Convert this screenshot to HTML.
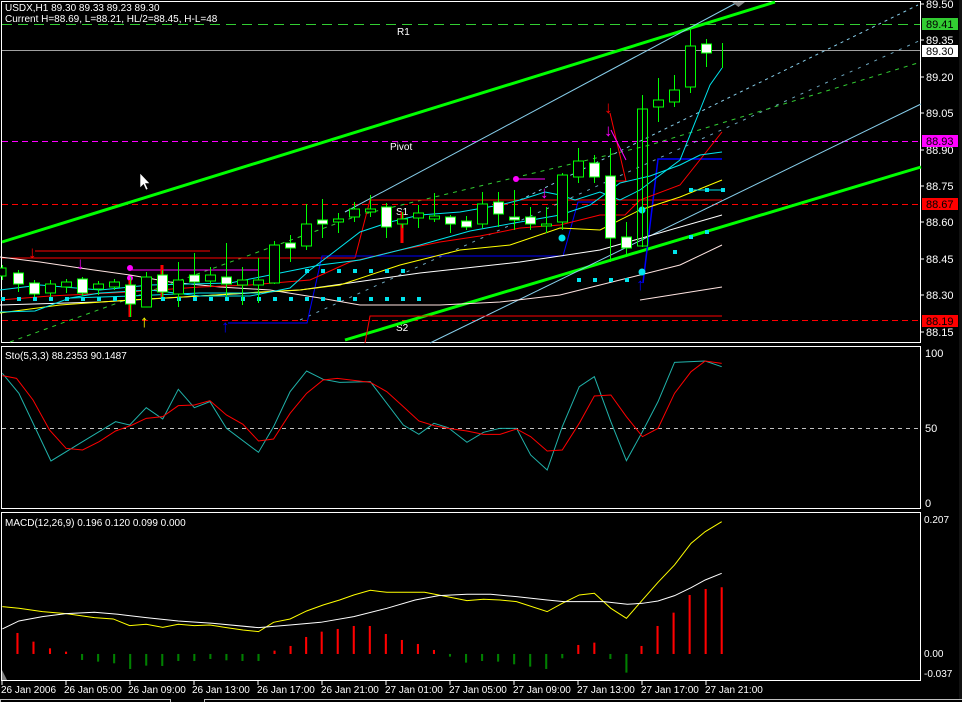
<!DOCTYPE html>
<html><head><meta charset="utf-8"><style>
html,body{margin:0;padding:0;background:#000;}
svg{display:block;font-family:"Liberation Sans",sans-serif;}
</style></head><body>
<svg width="962" height="702" viewBox="0 0 962 702" xmlns="http://www.w3.org/2000/svg">
<rect width="962" height="702" fill="#000"/>
<rect x="959" y="0" width="3" height="702" fill="#111"/>
<rect x="1.5" y="1.5" width="919" height="341" fill="none" stroke="#fff"/>
<rect x="1.5" y="346.5" width="919" height="162" fill="none" stroke="#fff"/>
<rect x="1.5" y="512.5" width="919" height="168" fill="none" stroke="#fff"/>

<line x1="2" y1="24.5" x2="920" y2="24.5" stroke="#32cd32" stroke-dasharray="10,6"/>
<line x1="2" y1="50.5" x2="920" y2="50.5" stroke="#a0a0a0"/>
<line x1="2" y1="141.5" x2="920" y2="141.5" stroke="#f0f" stroke-dasharray="6,4"/>
<line x1="2" y1="204.5" x2="920" y2="204.5" stroke="#f00" stroke-dasharray="6,4"/>
<line x1="2" y1="320.5" x2="920" y2="320.5" stroke="#f00" stroke-dasharray="6,4"/>
<g fill="#fff" font-size="10">
<text x="397" y="35">R1</text>
<text x="390" y="150">Pivot</text>
<text x="396" y="215">S1</text>
<text x="396" y="331">S2</text>
</g>
<line x1="2" y1="242" x2="775" y2="2" stroke="#00ff00" stroke-width="3"/>
<line x1="345" y1="340" x2="921" y2="167" stroke="#00ff00" stroke-width="3"/>
<line x1="345" y1="212" x2="738" y2="2" stroke="#87ceeb" stroke-width="1"/>
<line x1="430" y1="343" x2="921" y2="104" stroke="#87ceeb" stroke-width="1"/>
<line x1="520" y1="200" x2="918" y2="5" stroke="#87ceeb" stroke-dasharray="3,4"/>
<line x1="300" y1="320" x2="921" y2="40" stroke="#87ceeb" stroke-dasharray="3,6" opacity="0.8"/>
<polyline points="10,342 360,215 650,145 921,62" fill="none" stroke="#32cd32" stroke-dasharray="4,5"/>

<line x1="2" y1="258" x2="355" y2="258" stroke="#f00"/>
<polyline points="355,258 370,200 722,200" fill="none" stroke="#f00"/>
<polyline points="365,343 370,316 722,316" fill="none" stroke="#f00"/>
<line x1="35" y1="251" x2="210" y2="251" stroke="#f00"/>
<line x1="130" y1="270" x2="258" y2="270" stroke="#f0f"/>
<circle cx="130" cy="268" r="3" fill="#f0f"/>
<circle cx="130" cy="278" r="3" fill="#f0f"/>
<polyline points="228,323 307,323 322,256 563,256 578,202 595,202" fill="none" stroke="#0000ff"/>
<polyline points="643,283 658,159 722,159" fill="none" stroke="#0000ff" stroke-width="1.5"/>
<line x1="516" y1="179" x2="545" y2="179" stroke="#f0f"/>
<circle cx="516" cy="179" r="3" fill="#f0f"/>
<polyline points="610,113 626,181 611,181" fill="none" stroke="#f00"/>
<line x1="611" y1="130" x2="626" y2="160" stroke="#f0f"/>
<circle cx="611" cy="181" r="3.5" fill="#f0f"/>

<polyline points="0,257 40,262 80,268 130,275 170,282 220,287 270,290 320,298 360,305 400,305 440,305 500,302 560,295 620,280 680,265 722,245" fill="none" stroke="#ffe4e1"/>
<polyline points="0,305 100,302 200,296 300,290 420,273 520,262 600,250 722,215" fill="none" stroke="#fff"/>
<polyline points="640,300 722,287" fill="none" stroke="#ffe4e1"/>
<polyline points="0,313 60,305 130,300 200,296 260,292 300,290 340,285 400,265 460,250 510,245 560,228 600,230 640,210 680,197 722,180" fill="none" stroke="#ff0"/>
<polyline points="0,300 50,296 130,292 200,287 250,285 310,280 350,262 400,250 440,242 480,236 520,228 560,225 600,215 625,215 640,200 680,185 722,132" fill="none" stroke="#f00"/>
<polyline points="0,290 40,285 100,290 150,285 230,283 280,273 320,265 360,260 420,245 470,231 520,222 560,215 590,205 620,183 650,176 680,165 700,155 722,152" fill="none" stroke="#00e5ee"/>
<polyline points="0,312 35,311 70,298 100,293 150,290 200,296 250,296 290,288 310,270 330,255 360,232 390,222 420,215 460,212 500,205 520,200 545,192 560,195 575,200 600,192 620,200 640,190 680,160 700,110 710,85 722,68" fill="none" stroke="#00e5ee"/>
<polyline points="70,298 130,296 200,293 260,293" fill="none" stroke="#00e5ee"/>
<g fill="#00e5ee">
<rect x="1" y="297" width="4" height="4"/><rect x="17" y="297" width="4" height="4"/><rect x="33" y="297" width="4" height="4"/><rect x="49" y="297" width="4" height="4"/><rect x="65" y="297" width="4" height="4"/><rect x="81" y="297" width="4" height="4"/><rect x="97" y="297" width="4" height="4"/><rect x="113" y="297" width="4" height="4"/><rect x="129" y="297" width="4" height="4"/><rect x="145" y="297" width="4" height="4"/><rect x="161" y="297" width="4" height="4"/><rect x="177" y="297" width="4" height="4"/><rect x="193" y="297" width="4" height="4"/><rect x="209" y="297" width="4" height="4"/><rect x="225" y="297" width="4" height="4"/><rect x="241" y="297" width="4" height="4"/><rect x="257" y="297" width="4" height="4"/><rect x="273" y="297" width="4" height="4"/><rect x="289" y="297" width="4" height="4"/><rect x="305" y="297" width="4" height="4"/><rect x="321" y="297" width="4" height="4"/><rect x="337" y="297" width="4" height="4"/><rect x="353" y="297" width="4" height="4"/><rect x="369" y="297" width="4" height="4"/><rect x="385" y="297" width="4" height="4"/><rect x="401" y="297" width="4" height="4"/><rect x="417" y="297" width="4" height="4"/>
<rect x="305" y="269" width="4" height="4"/><rect x="321" y="269" width="4" height="4"/><rect x="337" y="269" width="4" height="4"/><rect x="353" y="269" width="4" height="4"/><rect x="369" y="269" width="4" height="4"/><rect x="385" y="269" width="4" height="4"/><rect x="401" y="269" width="4" height="4"/>
<rect x="577" y="278" width="4" height="4"/><rect x="593" y="278" width="4" height="4"/><rect x="609" y="278" width="4" height="4"/><rect x="625" y="278" width="4" height="4"/>
<rect x="673" y="250" width="4" height="4"/><rect x="689" y="235" width="4" height="4"/><rect x="705" y="230" width="4" height="4"/>
<rect x="689" y="188" width="4" height="4"/><rect x="705" y="188" width="4" height="4"/><rect x="721" y="188" width="4" height="4"/>
<circle cx="146" cy="298" r="3.5"/><circle cx="562" cy="238" r="3.5"/><circle cx="642" cy="210" r="3.5"/><circle cx="642" cy="272" r="3.5"/>
</g>
<line x1="689" y1="190" x2="723" y2="190" stroke="#00e5ee"/>

<line x1="130" y1="280" x2="130" y2="317" stroke="#f00" stroke-width="3"/>
<line x1="162" y1="265" x2="162" y2="297" stroke="#f00" stroke-width="3"/>
<line x1="402" y1="212" x2="402" y2="243" stroke="#f00" stroke-width="3"/>

<g stroke="#00ff00" stroke-width="1">
<line x1="2.5" y1="265" x2="2.5" y2="280"/><rect x="-1" y="268" width="7" height="8" fill="#000"/>
<line x1="18.5" y1="270" x2="18.5" y2="292"/><rect x="13.5" y="273" width="10" height="11" fill="#fff"/>
<line x1="34.5" y1="280" x2="34.5" y2="297"/><rect x="29.5" y="283" width="10" height="11" fill="#fff"/>
<line x1="50.5" y1="280" x2="50.5" y2="297"/><rect x="45.5" y="284" width="10" height="9" fill="#000"/>
<line x1="66.5" y1="279" x2="66.5" y2="293"/><rect x="61.5" y="282" width="10" height="5" fill="#000"/>
<line x1="82.5" y1="277" x2="82.5" y2="296"/><rect x="77.5" y="279" width="10" height="14" fill="#fff"/>
<line x1="98.5" y1="281" x2="98.5" y2="295"/><rect x="93.5" y="284" width="10" height="5" fill="#000"/>
<line x1="114.5" y1="279" x2="114.5" y2="290"/><rect x="109.5" y="282" width="10" height="5" fill="#000"/>
<line x1="130.5" y1="277" x2="130.5" y2="317"/><rect x="125.5" y="285" width="10" height="19" fill="#fff"/>
<line x1="146.5" y1="272" x2="146.5" y2="307"/><rect x="141.5" y="277" width="10" height="30" fill="#000"/>
<line x1="162.5" y1="270" x2="162.5" y2="297"/><rect x="157.5" y="275" width="10" height="17" fill="#fff"/>
<line x1="178.5" y1="262" x2="178.5" y2="307"/><rect x="173.5" y="280" width="10" height="14" fill="#000"/>
<line x1="194.5" y1="253" x2="194.5" y2="295"/><rect x="189.5" y="275" width="10" height="7" fill="#fff"/>
<line x1="210.5" y1="267" x2="210.5" y2="287"/><rect x="205.5" y="275" width="10" height="6" fill="#000"/>
<line x1="226.5" y1="243" x2="226.5" y2="297"/><rect x="221.5" y="277" width="10" height="7" fill="#fff"/>
<line x1="242.5" y1="267" x2="242.5" y2="305"/><rect x="237.5" y="280" width="10" height="5" fill="#000"/>
<line x1="258.5" y1="258" x2="258.5" y2="303"/><rect x="253.5" y="280" width="10" height="5" fill="#000"/>
<line x1="274.5" y1="241" x2="274.5" y2="284"/><rect x="269.5" y="245" width="10" height="38" fill="#000"/>
<line x1="290.5" y1="235" x2="290.5" y2="262"/><rect x="285.5" y="243" width="10" height="5" fill="#fff"/>
<line x1="306.5" y1="204" x2="306.5" y2="250"/><rect x="301.5" y="224" width="10" height="22" fill="#000"/>
<line x1="322.5" y1="199" x2="322.5" y2="238"/><rect x="317.5" y="220" width="10" height="4" fill="#fff"/>
<line x1="338.5" y1="213" x2="338.5" y2="233"/><rect x="333.5" y="219" width="10" height="3" fill="#000"/>
<line x1="354.5" y1="202" x2="354.5" y2="222"/><rect x="349.5" y="209" width="10" height="8" fill="#000"/>
<line x1="370.5" y1="195" x2="370.5" y2="217"/><rect x="365.5" y="209" width="10" height="3" fill="#000"/>
<line x1="386.5" y1="203" x2="386.5" y2="238"/><rect x="381.5" y="207" width="10" height="20" fill="#fff"/>
<line x1="402.5" y1="212" x2="402.5" y2="228"/><rect x="397.5" y="219" width="10" height="5" fill="#000"/>
<line x1="418.5" y1="205" x2="418.5" y2="228"/><rect x="413.5" y="213" width="10" height="5" fill="#000"/>
<line x1="434.5" y1="193" x2="434.5" y2="222"/><rect x="429.5" y="216" width="10" height="3" fill="#000"/>
<line x1="450.5" y1="215" x2="450.5" y2="233"/><rect x="445.5" y="217" width="10" height="7" fill="#fff"/>
<line x1="466.5" y1="216" x2="466.5" y2="230"/><rect x="461.5" y="221" width="10" height="6" fill="#fff"/>
<line x1="482.5" y1="192" x2="482.5" y2="228"/><rect x="477.5" y="204" width="10" height="20" fill="#000"/>
<line x1="498.5" y1="192" x2="498.5" y2="227"/><rect x="493.5" y="202" width="10" height="12" fill="#fff"/>
<line x1="514.5" y1="190" x2="514.5" y2="230"/><rect x="509.5" y="217" width="10" height="3" fill="#fff"/>
<line x1="530.5" y1="207" x2="530.5" y2="230"/><rect x="525.5" y="217" width="10" height="7" fill="#fff"/>
<line x1="546.5" y1="207" x2="546.5" y2="233"/><rect x="541.5" y="224" width="10" height="2" fill="#000"/>
<line x1="562.5" y1="173" x2="562.5" y2="230"/><rect x="557.5" y="175" width="10" height="47" fill="#000"/>
<line x1="578.5" y1="148" x2="578.5" y2="183"/><rect x="573.5" y="161" width="10" height="16" fill="#000"/>
<line x1="594.5" y1="155" x2="594.5" y2="183"/><rect x="589.5" y="163" width="10" height="14" fill="#fff"/>
<line x1="610.5" y1="148" x2="610.5" y2="262"/><rect x="605.5" y="176" width="10" height="62" fill="#fff"/>
<line x1="626.5" y1="222" x2="626.5" y2="257"/><rect x="621.5" y="237" width="10" height="11" fill="#fff"/>
<line x1="642.5" y1="95" x2="642.5" y2="247"/><rect x="637.5" y="109" width="10" height="137" fill="none"/>
<line x1="658.5" y1="78" x2="658.5" y2="122"/><rect x="653.5" y="100" width="10" height="7" fill="#000"/>
<line x1="674.5" y1="75" x2="674.5" y2="107"/><rect x="669.5" y="90" width="10" height="12" fill="#000"/>
<line x1="690.5" y1="28" x2="690.5" y2="93"/><rect x="685.5" y="46" width="10" height="41" fill="#000"/>
<line x1="706.5" y1="39" x2="706.5" y2="67"/><rect x="701.5" y="44" width="10" height="9" fill="#fff"/>
<line x1="722.5" y1="43" x2="722.5" y2="68"/>
</g>
<g font-size="17" font-weight="bold">
<text x="28" y="258" fill="#f00">↓</text>
<text x="76" y="269" fill="#f0f">↓</text>
<text x="540" y="198" fill="#f0f">↓</text>
<text x="604" y="113" fill="#f00">↓</text>
<text x="604" y="136" fill="#f0f">↓</text>
<text x="140" y="327" fill="#ff0">↑</text>
<text x="221" y="332" fill="#00f">↑</text>
<text x="636" y="290" fill="#00f">↑</text>
</g>
<path d="M140,173 L140,188 L143.5,184.5 L146,190 L148,189 L145.5,183.5 L150,183.5 Z" fill="#fff" stroke="#000" stroke-width="0.6"/>
<path d="M732,2 L745,2 L738.5,7 Z" fill="#808080"/>

<g stroke="#fff"><line x1="921" y1="4" x2="924" y2="4"/><line x1="921" y1="40" x2="924" y2="40"/><line x1="921" y1="77" x2="924" y2="77"/><line x1="921" y1="113" x2="924" y2="113"/><line x1="921" y1="150" x2="924" y2="150"/><line x1="921" y1="186" x2="924" y2="186"/><line x1="921" y1="222" x2="924" y2="222"/><line x1="921" y1="259" x2="924" y2="259"/><line x1="921" y1="295" x2="924" y2="295"/><line x1="921" y1="332" x2="924" y2="332"/></g>
<g fill="#fff" font-size="11">
<text x="926" y="8">89.50</text><text x="926" y="44">89.35</text><text x="926" y="81">89.20</text><text x="926" y="117">89.05</text><text x="926" y="154">88.90</text><text x="926" y="190">88.75</text><text x="926" y="226">88.60</text><text x="926" y="263">88.45</text><text x="926" y="299">88.30</text><text x="926" y="336">88.15</text>
</g>
<rect x="922" y="18" width="36" height="12" fill="#32cd32"/>
<rect x="922" y="45" width="36" height="12" fill="#fff"/>
<rect x="922" y="135" width="36" height="12" fill="#f0f"/>
<rect x="922" y="198" width="36" height="12" fill="#f00"/>
<rect x="922" y="315" width="36" height="12" fill="#f00"/>
<g fill="#000" font-size="11">
<text x="926" y="28">89.41</text><text x="926" y="55">89.30</text><text x="926" y="145">88.93</text><text x="926" y="208">88.67</text><text x="926" y="325">88.19</text>
</g>
<g fill="#fff" font-size="10">
<text x="5" y="11">USDX,H1  89.30 89.33 89.23 89.30</text>
<text x="5" y="22">Current H=88.69, L=88.21, HL/2=88.45, H-L=48</text>
</g>

<line x1="2" y1="428.5" x2="920" y2="428.5" stroke="#c0c0c0" stroke-dasharray="4,4"/>
<g transform="translate(0,345) scale(0.4717,0.3333)">
<polyline vector-effect="non-scaling-stroke" fill="none" stroke="#20b2aa" stroke-width="1" points="5,85 40,145 108,348 175,290 245,230 275,240 310,188 345,222 378,133 412,188 445,170 480,250 548,322 580,245 615,140 650,78 685,103 720,112 785,110 855,240 888,268 920,235 950,248 990,292 1025,262 1060,250 1095,250 1125,330 1160,375 1192,245 1228,125 1260,95 1295,230 1328,347 1362,260 1395,170 1430,52 1495,48 1530,65"/>
<polyline vector-effect="non-scaling-stroke" fill="none" stroke="#f00" stroke-width="1" points="5,92 35,100 70,165 105,255 140,310 175,315 210,290 245,258 280,240 310,220 345,215 378,182 412,180 445,167 480,210 515,238 548,288 580,282 615,205 650,145 685,105 715,100 785,112 820,140 855,185 888,228 920,242 950,250 990,258 1025,268 1060,268 1095,252 1125,275 1160,318 1192,315 1228,235 1260,153 1295,150 1328,215 1362,275 1395,250 1430,145 1465,80 1495,48 1530,55"/>
</g>
<text x="5" y="359" fill="#fff" font-size="10">Sto(5,3,3) 88.2353 90.1487</text>
<g fill="#fff" font-size="11"><text x="925" y="357">100</text><text x="925" y="432">50</text><text x="925" y="507">0</text></g>

<g transform="translate(0,345) scale(0.4717,0.3333)" stroke-width="4.4">
<g stroke="#f00">
<line x1="37" y1="927" x2="37" y2="864"/><line x1="71" y1="927" x2="71" y2="890"/><line x1="106" y1="927" x2="106" y2="910"/><line x1="140" y1="927" x2="140" y2="920"/>
<line x1="582" y1="927" x2="582" y2="917"/><line x1="616" y1="927" x2="616" y2="903"/><line x1="649" y1="927" x2="649" y2="876"/><line x1="682" y1="927" x2="682" y2="860"/><line x1="716" y1="927" x2="716" y2="852"/><line x1="750" y1="927" x2="750" y2="843"/><line x1="784" y1="927" x2="784" y2="843"/><line x1="818" y1="927" x2="818" y2="867"/><line x1="852" y1="927" x2="852" y2="885"/><line x1="886" y1="927" x2="886" y2="897"/><line x1="920" y1="927" x2="920" y2="915"/>
<line x1="1226" y1="927" x2="1226" y2="900"/><line x1="1260" y1="927" x2="1260" y2="893"/>
<line x1="1360" y1="927" x2="1360" y2="903"/><line x1="1394" y1="927" x2="1394" y2="843"/><line x1="1428" y1="927" x2="1428" y2="803"/><line x1="1462" y1="927" x2="1462" y2="750"/><line x1="1496" y1="927" x2="1496" y2="732"/><line x1="1530" y1="927" x2="1530" y2="727"/>
</g>
<g stroke="#008000">
<line x1="174" y1="927" x2="174" y2="945"/><line x1="208" y1="927" x2="208" y2="950"/><line x1="242" y1="927" x2="242" y2="955"/><line x1="276" y1="927" x2="276" y2="972"/><line x1="310" y1="927" x2="310" y2="962"/><line x1="344" y1="927" x2="344" y2="963"/><line x1="378" y1="927" x2="378" y2="948"/><line x1="412" y1="927" x2="412" y2="948"/><line x1="446" y1="927" x2="446" y2="942"/><line x1="480" y1="927" x2="480" y2="946"/><line x1="514" y1="927" x2="514" y2="948"/><line x1="548" y1="927" x2="548" y2="948"/>
<line x1="954" y1="927" x2="954" y2="935"/><line x1="988" y1="927" x2="988" y2="953"/><line x1="1022" y1="927" x2="1022" y2="948"/><line x1="1056" y1="927" x2="1056" y2="950"/><line x1="1090" y1="927" x2="1090" y2="958"/><line x1="1124" y1="927" x2="1124" y2="965"/><line x1="1158" y1="927" x2="1158" y2="972"/><line x1="1192" y1="927" x2="1192" y2="940"/>
<line x1="1294" y1="927" x2="1294" y2="942"/><line x1="1328" y1="927" x2="1328" y2="983"/>
</g>
<polyline vector-effect="non-scaling-stroke" fill="none" stroke="#ff0" stroke-width="1" points="5,785 40,790 90,800 140,806 200,818 240,822 275,842 310,838 345,847 378,838 412,842 445,840 480,848 515,855 548,860 580,832 615,822 650,798 685,780 720,765 750,750 785,736 820,742 900,742 930,750 990,767 1025,763 1060,765 1095,770 1160,800 1192,775 1228,750 1260,745 1295,790 1328,820 1362,765 1395,712 1430,660 1465,595 1495,560 1530,530"/>
<polyline vector-effect="non-scaling-stroke" fill="none" stroke="#fff" stroke-width="1" points="5,852 40,828 90,815 140,806 200,802 250,808 310,818 378,828 450,835 548,848 615,840 680,832 750,815 820,790 880,765 930,752 990,748 1040,748 1095,755 1160,765 1195,770 1280,770 1330,778 1362,775 1395,768 1430,752 1465,728 1495,705 1530,685"/>
</g>
<path d="M2,670 L2,680 L7,680 Z" fill="#808080"/>
<text x="5" y="526" fill="#fff" font-size="10">MACD(12,26,9) 0.196 0.120 0.099 0.000</text>
<g fill="#fff" font-size="10"><text x="924" y="523">0.207</text><text x="924" y="657">0.00</text><text x="924" y="677">-0.037</text></g>

<g stroke="#fff"><line x1="2" y1="681" x2="2" y2="685"/><line x1="66" y1="681" x2="66" y2="685"/><line x1="130" y1="681" x2="130" y2="685"/><line x1="194" y1="681" x2="194" y2="685"/><line x1="258" y1="681" x2="258" y2="685"/><line x1="322" y1="681" x2="322" y2="685"/><line x1="386" y1="681" x2="386" y2="685"/><line x1="450" y1="681" x2="450" y2="685"/><line x1="514" y1="681" x2="514" y2="685"/><line x1="578" y1="681" x2="578" y2="685"/><line x1="642" y1="681" x2="642" y2="685"/><line x1="706" y1="681" x2="706" y2="685"/></g>
<g fill="#fff" font-size="10">
<text x="1" y="693">26 Jan 2006</text><text x="64" y="693">26 Jan 05:00</text><text x="128" y="693">26 Jan 09:00</text><text x="192" y="693">26 Jan 13:00</text><text x="257" y="693">26 Jan 17:00</text><text x="321" y="693">26 Jan 21:00</text><text x="385" y="693">27 Jan 01:00</text><text x="449" y="693">27 Jan 05:00</text><text x="513" y="693">27 Jan 09:00</text><text x="577" y="693">27 Jan 13:00</text><text x="641" y="693">27 Jan 17:00</text><text x="705" y="693">27 Jan 21:00</text>
</g>
<rect x="0.5" y="699.5" width="170" height="4" fill="#000" stroke="#c0c0c0"/>
<rect x="204.5" y="699.5" width="760" height="4" fill="#000" stroke="#c0c0c0"/>
</svg>
</body></html>
